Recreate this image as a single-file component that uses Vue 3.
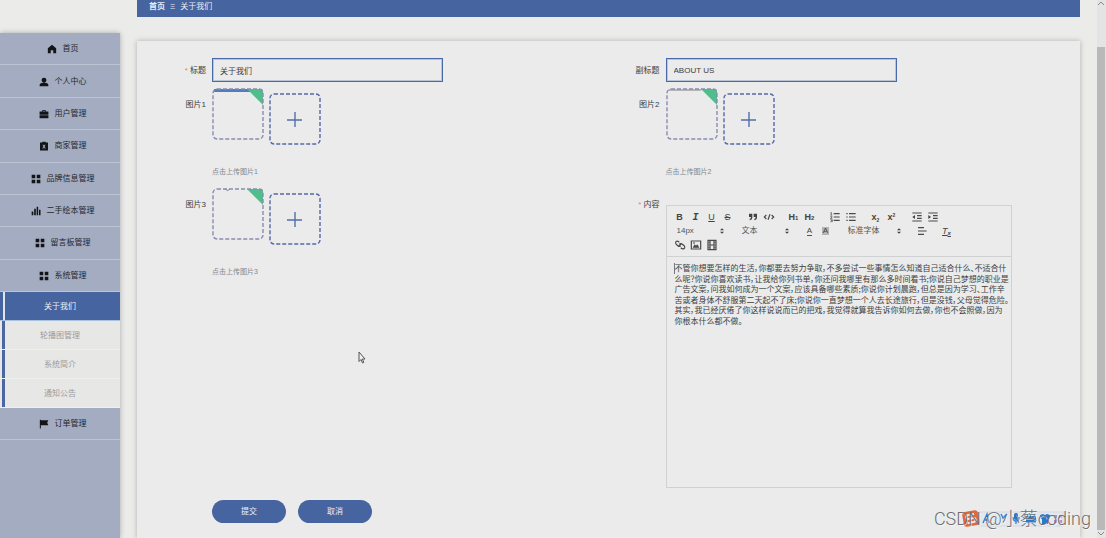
<script setup>
import { ref } from 'vue'

const menu = [
  { text: '首页', d: 'M6 .8 11 5v6.2H7.5V7.6h-3v3.6H1V5z' },
  { text: '个人中心', d: 'M6 .8a2.9 2.9 0 0 1 2.9 2.9C8.900 5.300 7.700 6.800 6 6.800S3.100 5.300 3.100 3.700A2.900 2.900 0 0 1 6 .8zM.8 11.200V9.600C.8 8 2.600 7.300 4.200 7h3.600c1.600.3 3.400 1 3.400 2.600v1.600z' },
  { text: '用户管理', d: 'M4 3V1.200h4V3h3.300v3.800H.7V3zm1 0h2v-.8H5zM.7 7.500h10.600V11H.7z' },
  { text: '商家管理', d: 'M1.200 1.800H4V.8h4v1h2.800v9.700H1.200zM4.200 4.600 5.200 6.500 4 8.900h1.200L6 7.300l.8 1.600H8L6.800 6.500l1-1.900H6.700L6 5.700l-.7-1.100z' },
  { text: '品牌信息管理', d: 'M.8.8h4.300v4.300H.8zM6.900.8h4.300v4.300H6.900zM.8 6.900h4.300v4.300H.8zM6.900 6.900h4.300v4.300H6.900z' },
  { text: '二手绘本管理', d: 'M.8 6.500h2v4.700h-2zM3.800 3.300h2v7.900h-2zM6.800.8h1.800v10.400H6.800zM9.600 4.500h1.800v6.700H9.600z' },
  { text: '留言板管理', d: 'M.8.8h4.300v4.300H.8zM6.900.8h4.300v4.300H6.900zM.8 6.900h4.300v4.300H.8zM6.900 6.900h4.300v4.300H6.900z' },
  { text: '系统管理', d: 'M.8.8h4.300v4.300H.8zM6.900.8h4.300v4.300H6.900zM.8 6.900h4.300v4.300H.8zM6.900 6.900h4.300v4.300H6.900z' }
]
const submenu = ['关于我们', '轮播图管理', '系统简介', '通知公告']

const title = ref('关于我们')
const subtitle = ref('ABOUT US')

const paragraph = [
  '不管你想要怎样的生活，你都要去努力争取，不多尝试一些事情怎么知道自己适合什么、不适合什',
  '么呢？你说你喜欢读书，让我给你列书单，你还问我哪里有那么多时间看书;你说自己梦想的职业是',
  '广告文案，问我如何成为一个文案，应该具备哪些素质;你说你计划晨跑，但总是因为学习、工作辛',
  '苦或者身体不舒服第二天起不了床;你说你一直梦想一个人去长途旅行，但是没钱，父母觉得危险。',
  '其实，我已经厌倦了你这样说说而已的把戏，我觉得就算我告诉你如何去做，你也不会照做，因为',
  '你根本什么都不做。'
]
const uploads = [{ n: 1 }, { n: 2 }, { n: 3 }]
</script>

<template>
  <div class="page">
    <nav class="side" aria-label="主菜单">
      <ul class="menu">
        <li v-for="m in menu" :key="m.text">
          <a href="#" class="item">
            <svg class="mi" viewBox="0 0 12 12"><path :d="m.d" fill-rule="evenodd" /></svg>
            <span>{{ m.text }}</span>
          </a>
        </li>
      </ul>
      <ul class="submenu">
        <li v-for="(s, i) in submenu" :key="s">
          <a href="#" class="sub" :class="{ active: i === 0 }">{{ s }}</a>
        </li>
      </ul>
      <a href="#" class="item last">
        <svg class="mi" viewBox="0 0 12 12"><path d="M1 .8h1.200v.6h9L9.800 4.400l1.400 3H2.200v4H1z" /></svg>
        <span>订单管理</span>
      </a>
    </nav>

    <main class="main">
      <header class="crumbs">
        <a href="#" class="home">首页</a>
        <span class="sep">Ξ</span>
        <span>关于我们</span>
      </header>

      <form class="card" @submit.prevent>
        <div class="grid">
          <div class="field short">
            <label for="title"><i>*</i> 标题</label>
            <input id="title" v-model="title" class="text" type="text" />
          </div>
          <div class="field short">
            <label for="subtitle">副标题</label>
            <input id="subtitle" v-model="subtitle" class="text" type="text" />
          </div>

          <div v-for="u in uploads" :key="u.n" class="field upload">
            <label :for="'pic' + u.n">图片{{ u.n }}</label>
            <div class="up">
              <div class="boxes">
                <svg class="box" viewBox="0 0 52 52">
                  <path v-if="u.n === 1" class="bar" d="M2 1h34l3 3H2z" />
                  <path v-if="u.n === 2" class="hair" d="M3 2h32" />
                  <path v-if="u.n === 3" class="hair" d="M13 1q3 3 5 0" />
                  <path class="corner" d="M35 1h14q2 0 2 2v14z" />
                  <rect class="dash thumb" x="1" y="1" width="50" height="50" rx="4" />
                </svg>
                <button :id="'pic' + u.n" type="button" class="add" :aria-label="'上传图片' + u.n">
                  <svg class="box" viewBox="0 0 52 52">
                    <rect class="dash" x="1" y="1" width="50" height="50" rx="4" />
                    <path class="plus" d="M26 19v15M18 27h15" />
                  </svg>
                </button>
              </div>
              <p class="hint">点击上传图片{{ u.n }}</p>
            </div>
          </div>

          <div class="field rich">
            <label for="content"><i>*</i> 内容</label>
            <div class="editor">
              <div class="tools">
                <div class="row">
                  <div class="group">
                    <button type="button" class="b">B</button>
                    <button type="button" class="it">I</button>
                    <button type="button" class="u">U</button>
                    <button type="button" class="s">S</button>
                  </div>
                  <div class="group">
                    <button type="button" aria-label="引用"><svg viewBox="0 0 18 18"><path class="f" d="M3 4h5v6q0 3-4 4v-2q2-1 2-3H3zM10 4h5v6q0 3-4 4v-2q2-1 2-3h-3z" /></svg></button>
                    <button type="button" aria-label="代码"><svg viewBox="0 0 18 18"><path class="l" d="M5 6 2 9l3 3M13 6l3 3-3 3M10.500 5l-3 8" /></svg></button>
                  </div>
                  <div class="group">
                    <button type="button" class="b">H<small>1</small></button>
                    <button type="button" class="b">H<small>2</small></button>
                  </div>
                  <div class="group">
                    <button type="button" aria-label="有序列表"><svg viewBox="0 0 18 18"><path class="l" d="M7 4h9M7 9h9M7 14h9" /><path class="t" d="M2 3l1.500-1v4M2 6h3M2 8h2.500v1.500L2 11h3M2 13h3v3H2M3 14.500h2" /></svg></button>
                    <button type="button" aria-label="无序列表"><svg viewBox="0 0 18 18"><path class="l" d="M6 4h10M6 9h10M6 14h10M2 4h2M2 9h2M2 14h2" /></svg></button>
                  </div>
                  <div class="group">
                    <button type="button" class="x">x<sub>2</sub></button>
                    <button type="button" class="x">x<sup>2</sup></button>
                  </div>
                  <div class="group">
                    <button type="button" aria-label="减少缩进"><svg viewBox="0 0 18 18"><path class="l" d="M2 3h14M2 15h14M9 7h7M9 11h7" /><path class="f" d="M6 6v6L2 9z" /></svg></button>
                    <button type="button" aria-label="增加缩进"><svg viewBox="0 0 18 18"><path class="l" d="M2 3h14M2 15h14M9 7h7M9 11h7" /><path class="f" d="M2 6v6l4-3z" /></svg></button>
                  </div>
                </div>
                <div class="row">
                  <div class="pick">
                    <select aria-label="字号"><option>14px</option></select>
                    <svg viewBox="0 0 6 8"><path d="M0 3l3-3 3 3zM0 5h6L3 8z" /></svg>
                  </div>
                  <div class="pick">
                    <select aria-label="段落"><option>文本</option></select>
                    <svg viewBox="0 0 6 8"><path d="M0 3l3-3 3 3zM0 5h6L3 8z" /></svg>
                  </div>
                  <div class="group">
                    <button type="button" class="color"><span>A</span></button>
                    <button type="button" class="fill"><span>A</span></button>
                  </div>
                  <div class="pick wide">
                    <select aria-label="字体"><option>标准字体</option></select>
                    <svg viewBox="0 0 6 8"><path d="M0 3l3-3 3 3zM0 5h6L3 8z" /></svg>
                  </div>
                  <div class="group">
                    <button type="button" aria-label="对齐"><svg viewBox="0 0 18 18"><path class="l" d="M3 4h9M3 9h13M3 14h9" /></svg></button>
                  </div>
                  <div class="group">
                    <button type="button" class="clear"><span>T</span><small>x</small></button>
                  </div>
                </div>
                <div class="row">
                  <div class="group">
                    <button type="button" aria-label="链接"><svg viewBox="0 0 18 18"><path class="l" d="M7 11l4-4M8 5 6 3.500Q3.500 2.500 2.500 5 2 7 4 8.500l3 2.500q2 .5 3-1M10 13l2 1.500q3 1 4-1.500.5-2-1.500-3.500L11 7Q9 6.500 8 8" /></svg></button>
                    <button type="button" aria-label="图片"><svg viewBox="0 0 18 18"><path class="l" d="M2 3h14v12H2z" /><path class="f" d="M4 13l3-5 2 2 2-2 3 5zM5 5h2v2H5z" /></svg></button>
                    <button type="button" aria-label="视频"><svg viewBox="0 0 18 18"><path class="l" d="M3 2h12v14H3zM6 2v14M12 2v14M6 9h6" /><path class="t" d="M3 5h3M3 9h3M3 13h3M12 5h3M12 9h3M12 13h3" /></svg></button>
                  </div>
                </div>
              </div>
              <div id="content" class="body" contenteditable="true" role="textbox" aria-label="内容" spellcheck="false">
                <span v-for="l in paragraph" :key="l">{{ l }}</span>
              </div>
            </div>
          </div>
        </div>
        <div class="actions">
          <button type="submit">提交</button>
          <button type="button">取消</button>
        </div>
      </form>
    </main>

    <div class="scroll"><div class="thumb-bar"></div><svg viewBox="0 0 8 8"><path d="M1 2l3 3 3-3" /></svg></div>
    <svg class="up-arrow" viewBox="0 0 8 8"><path d="M1 5l3-3 3 3" /></svg>

    <svg class="cursor" viewBox="0 0 8 13"><path d="M1 1v9.500l2-2 1.500 3.500 1.300-.6L4.400 8H7z" /></svg>

    <svg class="ime" viewBox="0 0 104 20">
      <rect class="tray" x="18" y="3" width="84" height="14" />
      <g transform="rotate(-10 10 10)">
        <rect class="logo" x="2" y="2" width="16" height="15" rx="3" />
        <path class="swirl" d="M14 5.500H8q-2.500 0-2.500 2T8 9.500h4q2.500 0 2.500 2t-2.500 2H6" />
      </g>
      <path class="ink" d="m22 14 4-9 2 9M24 11h4M40 5l2 4 4-4M55 4v6M52 8q0 4 3 4t3-4M55 12v3" />
      <rect class="solid" x="53" y="4" width="4" height="7" rx="2" />
      <path class="solid" d="M65 7h10v7H65zM79 6l3-1 2 1 2-1 3 1-1 4h-1v5h-6v-5h-1z" />
      <path class="violet" d="M93 6h3v3h-3zM98 6h3v3h-3zM93 11h3v3h-3zM98 11h3v3h-3z" />
    </svg>
    <div class="mark">CSDN @小蔡coding</div>
  </div>
</template>

<style>
body {
  margin: 0;
  background: #ebebea;
}
</style>

<style scoped>
.page {
  --blue: #4664a0;
  position: relative;
  display: flex;
  min-height: 100vh;
  overflow: hidden;
  box-sizing: border-box;
  background: #ebebea;
  color: #3c3d40;
  font: 8px/12px "Liberation Sans", "Noto Sans CJK SC", sans-serif;
}
* { box-sizing: border-box; }
ul, p { margin: 0; padding: 0; list-style: none; }
a { color: inherit; text-decoration: none; }
button, input, select { font: inherit; color: inherit; margin: 0; padding: 0; border: 0; background: none; }

.side {
  flex: 0 0 120px;
  margin-top: 33px;
  background: #a4acc1;
  box-shadow: 0 0 5px rgba(0, 0, 0, .28);
}
.menu {
  display: grid;
  grid-auto-rows: 1fr;
  min-height: 259px;
}
.item {
  display: flex;
  align-items: center;
  justify-content: center;
  gap: 6px;
  height: 100%;
  padding: 1px 0 0 5px;
  border-bottom: 1px solid #bcc4d4;
  color: #25272d;
}
.item.last { height: 32px; }
.mi { width: 10px; height: 10px; fill: #131417; }
.sub {
  position: relative;
  display: block;
  height: 29px;
  line-height: 30px;
  text-align: center;
  color: #9b9b9c;
  background: #e7e7e6;
  border-bottom: 1px solid #eeefef;
}
.sub::before {
  content: "";
  position: absolute;
  left: 2px;
  top: 0;
  bottom: 0;
  width: 3px;
  background: #4c66a3;
}
.sub.active { color: #eef1f7; background: var(--blue); border-bottom-color: #a9c2dd; }
.sub.active::before { width: 2px; left: 3px; background: #dfe4ed; }

.main {
  flex: 1;
  min-width: 0;
  display: flex;
  flex-direction: column;
  margin: 0 26px 0 17px;
}
.crumbs {
  display: flex;
  gap: 5px;
  height: 17px;
  padding: 1px 0 0 12px;
  color: #eaedf5;
  background: var(--blue);
}
.home { font-weight: 700; }
.card {
  flex: 1;
  margin-top: 24px;
  padding: 17px 18px 0;
  background: #eaebea;
  box-shadow: 0 0 5px rgba(0, 0, 0, .25);
}
.grid {
  display: grid;
  grid-template-columns: 1fr 1fr;
  grid-template-rows: 30px 100px auto;
}
.field { display: flex; min-width: 0; }
.field label {
  flex: 0 0 57px;
  padding-right: 6px;
  text-align: right;
  line-height: 34px;
  white-space: nowrap;
}
.short label { line-height: 26px; }
label i { color: #e08872; font-style: normal; }
.text {
  width: 231px;
  height: 24px;
  padding: 0 7px;
  border: 1px solid #4a69a8;
  outline: 1px solid rgba(74, 105, 168, .3);
  outline-offset: -2px;
}
.boxes { display: flex; gap: 5px; }
.box { display: block; width: 52px; height: 52px; }
.add { margin-top: 5px; }
.dash { fill: none; stroke: #5668aa; stroke-width: 1.400; stroke-dasharray: 4 2; }
.dash.thumb { stroke: #8a8cb0; }
.corner { fill: #50be8b; }
.bar { fill: #4f7dbd; }
.hair { fill: none; stroke: #7c7d86; stroke-width: 1; }
.plus { stroke: #536fab; stroke-width: 1.400; }
.hint { margin-top: 21px; color: #85878f; font-size: 7px; }

.editor {
  display: flex;
  flex-direction: column;
  width: 346px;
  min-height: 283px;
  margin-top: 17px;
  border: 1px solid #cfd1d3;
}
.tools {
  padding: 4px 3px 4px 5px;
  border-bottom: 1px solid #cfd1d3;
}
.row { display: flex; gap: 9px; height: 14px; }
.group { display: flex; }
.group button {
  display: flex;
  align-items: center;
  justify-content: center;
  width: 16px;
  height: 14px;
  color: #444;
}
.group svg { width: 12px; height: 12px; }
.l, .t { fill: none; stroke: #4a4a4a; stroke-width: 1.800; }
.t { stroke-width: 1; }
.f { fill: #444; }
.group .b { font-size: 9px; font-weight: 700; }
.group .it { font: italic 700 10px "Liberation Mono", monospace; }
.group .u { font-size: 9px; text-decoration: underline; }
.group .s { font-size: 9px; text-decoration: line-through; }
.b small { font-size: 6px; padding-top: 2px; }
.group .x { font-size: 9px; font-weight: 700; }
.x sub, .x sup { font-size: 5px; line-height: 6px; }
.x sub { padding-top: 5px; }
.x sup { padding-bottom: 5px; }
.color span { line-height: 8px; border-bottom: 1px solid #555; }
.fill span { padding: 0 1px; line-height: 8px; background: #b4b4b4; }
.clear { font-style: italic; text-decoration: underline; }
.clear span { font-size: 9px; }
.clear small { font-size: 6px; font-weight: 700; padding-top: 3px; }
.pick {
  display: grid;
  grid-template-columns: 1fr 4px;
  align-items: center;
  width: 56px;
  padding-right: 4px;
}
.pick.wide { width: 62px; }
.pick select { appearance: none; padding-left: 5px; color: #555; height: 14px; width: 100%; }
.pick svg { width: 4px; height: 6px; fill: #444; }

.body {
  display: grid;
  grid-auto-rows: 1fr;
  min-height: 63px;
  margin: 6px 0 0 8px;
  outline: 0;
  white-space: nowrap;
  line-height: 10px;
  font-family: "Noto Sans CJK SC", sans-serif;
  font-feature-settings: "palt";
}
.body span:first-child { box-shadow: -1px 0 #777; }

.actions { display: flex; gap: 12px; margin: 12px 0 14px 57px; }
.actions button {
  width: 74px;
  height: 23px;
  border-radius: 12px;
  color: #eef1f8;
  background: var(--blue);
}

.scroll {
  position: absolute;
  top: 0;
  right: 0;
  bottom: 0;
  width: 9px;
  padding-top: 47px;
  display: flex;
  flex-direction: column;
  background: #e4e4e4;
}
.thumb-bar { flex: 1; margin-right: 1px; background: #b9b9b9; }
.scroll svg, .up-arrow { width: 8px; height: 8px; fill: none; stroke: #888; stroke-width: 1; }
.up-arrow { position: absolute; top: 0; right: 1px; }
.cursor { position: absolute; left: 358px; top: 351px; width: 8px; height: 13px; fill: #eee; stroke: #555; stroke-width: 1; }

.ime { position: absolute; right: 41px; bottom: 9px; width: 104px; height: 20px; }
.tray { fill: #e2e8ee; stroke: #d3d9e0; }
.logo { fill: #e2673a; }
.swirl { fill: none; stroke: #f7e9e2; stroke-width: 2; }
.ink { fill: none; stroke: #3584d6; stroke-width: 1.400; }
.solid { fill: #2878d2; }
.violet { fill: #b68ad0; }
.mark {
  position: absolute;
  right: 15px;
  bottom: 7px;
  color: #6c6e71;
  font: 300 18px/24px Roboto, "Noto Sans CJK SC", sans-serif;
  text-shadow: 1px 1px 0 rgba(255, 255, 255, .6);
  white-space: nowrap;
}
</style>
